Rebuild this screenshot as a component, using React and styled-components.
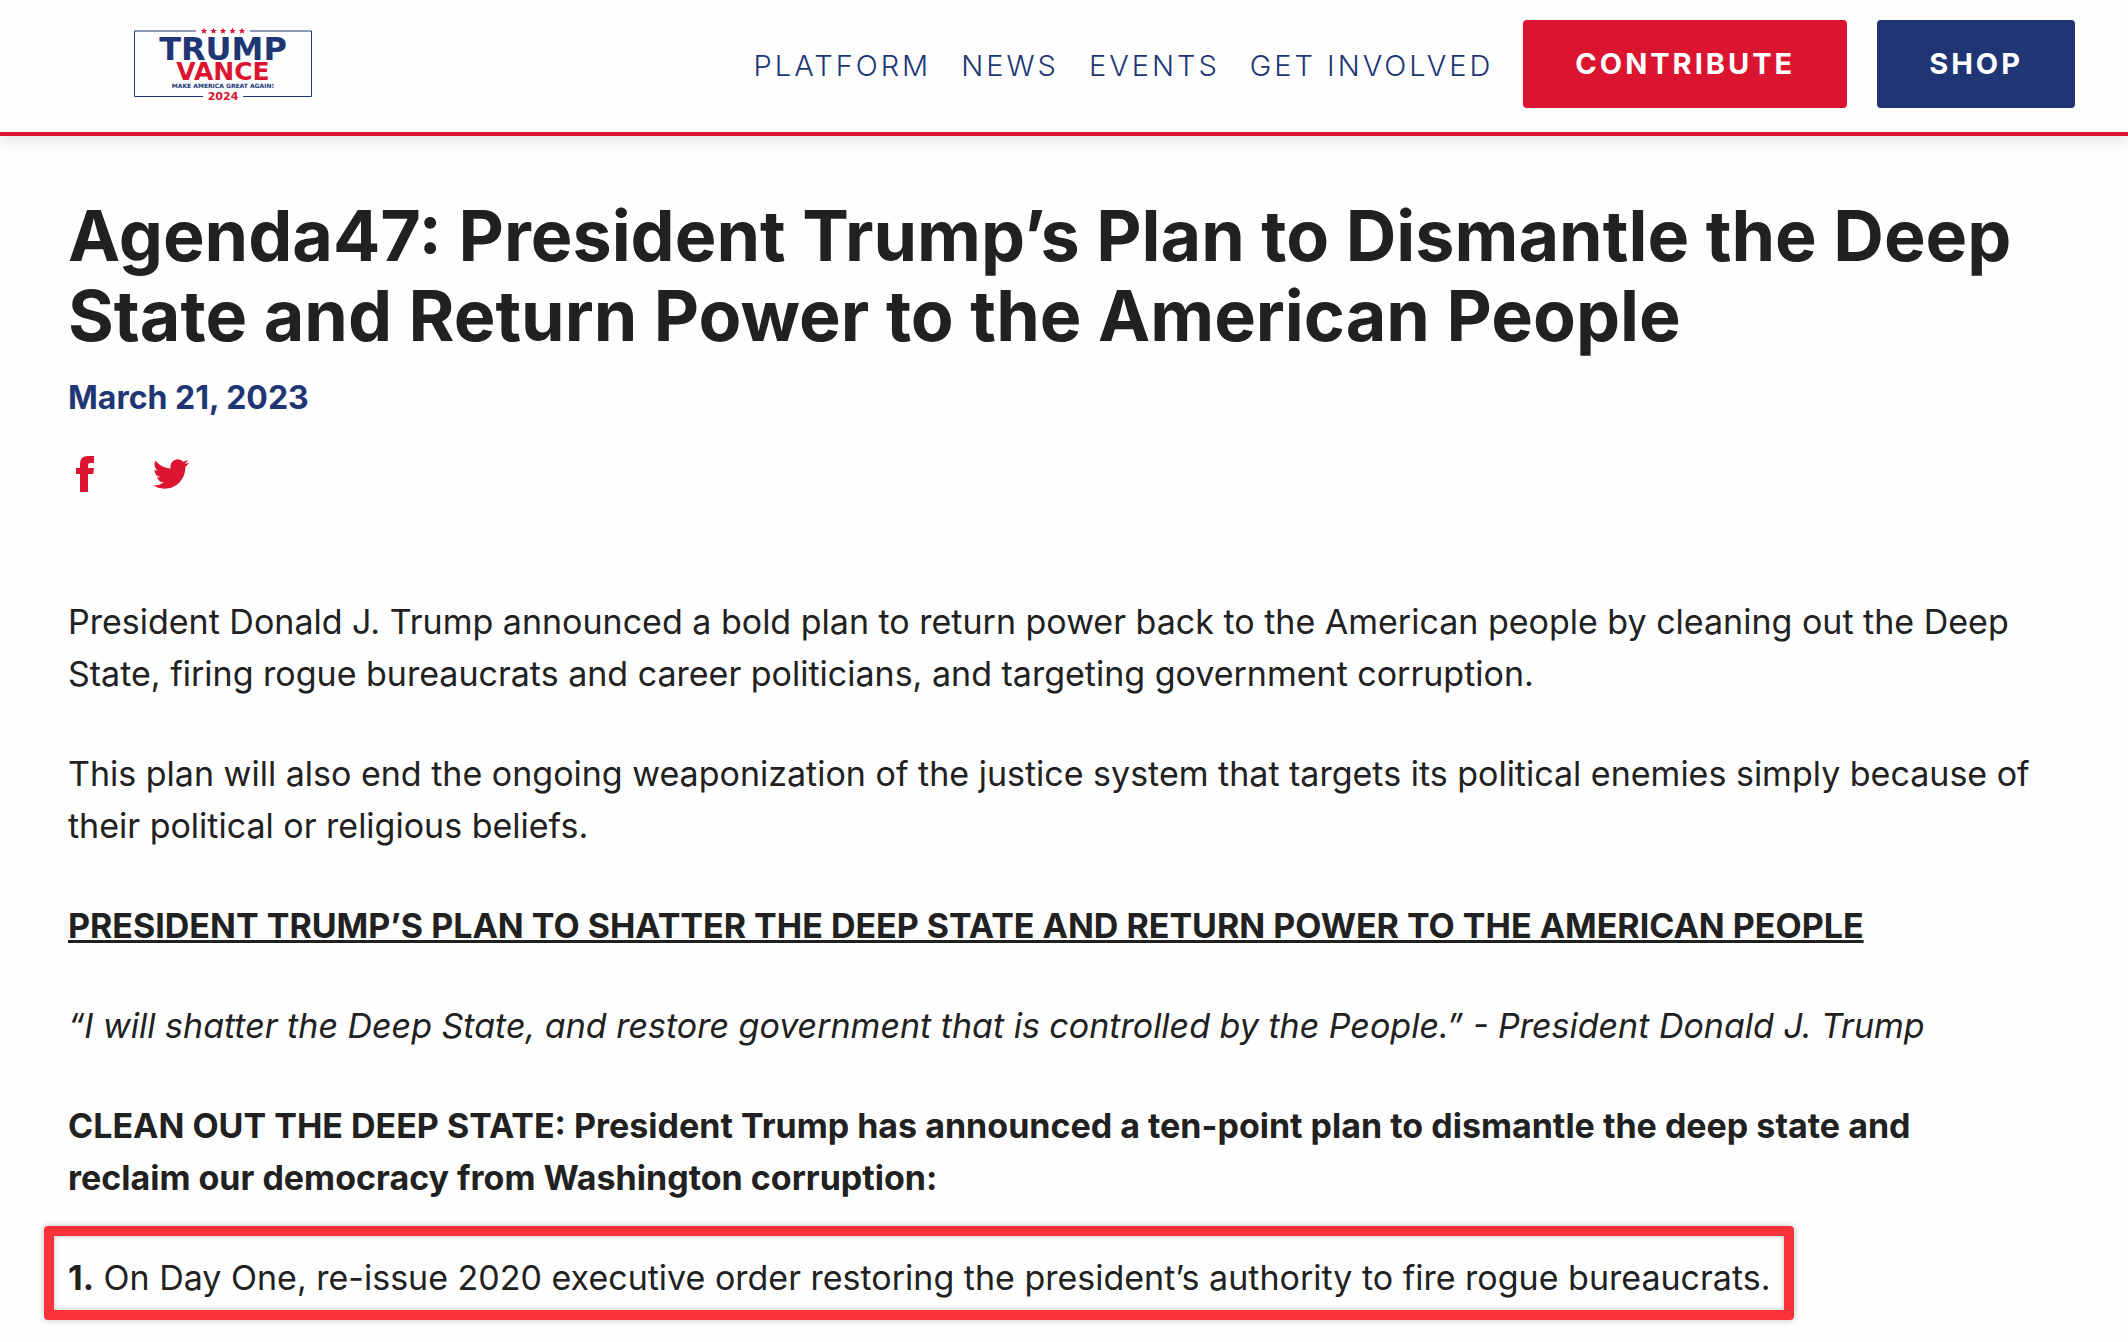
import React from "react";
import styled, { createGlobalStyle } from "styled-components";

const colors = { red: "#db1430", navy: "#203674", ink: "#212121", mark: "#fd3139" };

const GlobalStyle = createGlobalStyle`
  * { box-sizing: border-box; }
  body {
    margin: 0;
    background: #fefefe;
    color: ${colors.ink};
    font-family: Inter, "Open Sans", sans-serif;
    -webkit-font-smoothing: antialiased;
  }
`;

const Header = styled.header`
  display: flex;
  align-items: flex-start;
  justify-content: space-between;
  padding: 20px 53px 24px 134px;
  background: #fefefe;
  border-bottom: 4px solid ${colors.red};
  box-shadow: 0 4px 16px rgba(0, 0, 0, 0.12);
`;

const LogoLink = styled.a`
  display: block;
  padding-top: 6px;
  svg { display: block; }
`;

const Nav = styled.nav`
  display: flex;
  align-items: center;
  gap: 30px;
`;

const NavLink = styled.a`
  padding-top: 4px;
  color: ${colors.navy};
  font-size: 29px;
  font-weight: 300;
  line-height: 36px;
  letter-spacing: 3px;
  text-decoration: none;
  text-transform: uppercase;
  white-space: nowrap;
`;

const NavButton = styled.button`
  height: 88px;
  padding: 0 52px;
  border: 0;
  border-radius: 4px;
  background: ${(p) => p.$color};
  color: #fff;
  font: 700 29px/36px Inter, "Open Sans", sans-serif;
  letter-spacing: 3px;
  text-transform: uppercase;
  cursor: pointer;
`;

const Article = styled.article`
  padding: 60px 92px 22px 68px;
`;

const Title = styled.h1`
  margin: 0;
  font-size: 70px;
  font-weight: 700;
  line-height: 80px;
`;

const PostDate = styled.time`
  display: block;
  margin-top: 16px;
  color: ${colors.navy};
  font-size: 32px;
  font-weight: 700;
  line-height: 52px;
`;

const Share = styled.div`
  display: flex;
  align-items: center;
  gap: 55px;
  height: 48px;
  margin: 26px 0 98px;
  padding-left: 4px;
`;

const ShareLink = styled.a`
  display: flex;
  color: ${colors.red};
`;

const Paragraph = styled.p`
  margin: 0 0 48px;
  font-size: 34px;
  font-weight: ${(p) => (p.$bold ? 700 : 400)};
  font-style: ${(p) => (p.$italic ? "italic" : "normal")};
  line-height: 52px;
`;

const Underlined = styled.u`
  text-decoration-thickness: 3px;
  text-underline-offset: 2px;
`;

const Highlight = styled.p`
  width: fit-content;
  margin: -26px 0 0 -24px;
  padding: 16px 14px 6px;
  border: 10px solid ${colors.mark};
  border-radius: 4px;
  box-shadow: 0 0 6px rgba(0, 0, 0, 0.25), inset 0 0 5px rgba(0, 0, 0, 0.25);
  font-size: 34px;
  line-height: 52px;
`;

const STAR = "M0-3.4L.9-1.1 3.3-1 1.4.5 2 2.8 0 1.5-2 2.8-1.4.5-3.3-1-.9-1.1Z";

function Logo() {
  return (
    <svg width="178" height="78" viewBox="0 0 178 78" role="img" aria-label="Trump Vance 2024" fontFamily="'DejaVu Sans', sans-serif" fontWeight="700" textAnchor="middle">
      <path d="M62 5H.5V70.5H69M116 5H177.5V70.5H109" fill="none" stroke={colors.navy} />
      {[70, 79.5, 89, 98.5, 108].map((x) => (
        <path key={x} d={STAR} transform={`translate(${x} 5)`} fill={colors.red} />
      ))}
      <text x="89" y="34" fontSize="32" fill={colors.navy}>TRUMP</text>
      <text x="89" y="54" fontSize="25" fill={colors.red}>VANCE</text>
      <text x="89" y="62" fontSize="6" fill={colors.navy}>MAKE AMERICA GREAT AGAIN!</text>
      <text x="89" y="74" fontSize="11" fill={colors.red}>2024</text>
    </svg>
  );
}

function FacebookIcon() {
  return (
    <svg width="26" height="36" viewBox="0 0 26 36" fill="currentColor" aria-hidden="true">
      <path d="M8 36V18H4V12H8V8.300C8 3 10.500 0 16 0H22V7H18.500C16.500 7 16 8 16 9.500V12H22L21.300 18H16V36Z" />
    </svg>
  );
}

function TwitterIcon() {
  return (
    <svg width="36" height="36" viewBox="0 0 24 24" fill="currentColor" aria-hidden="true">
      <path d="M23.953 4.570a10 10 0 0 1-2.825.775 4.958 4.958 0 0 0 2.163-2.723 10 10 0 0 1-3.127 1.184 4.920 4.920 0 0 0-8.384 4.482C7.690 8.095 4.067 6.130 1.640 3.162a4.822 4.822 0 0 0-.666 2.475c0 1.710.870 3.213 2.188 4.096a4.904 4.904 0 0 1-2.228-.616v.060a4.923 4.923 0 0 0 3.946 4.827 4.996 4.996 0 0 1-2.212.085 4.936 4.936 0 0 0 4.604 3.417 9.867 9.867 0 0 1-6.102 2.105c-.390 0-.779-.023-1.170-.067a13.995 13.995 0 0 0 7.557 2.209c9.053 0 13.998-7.496 13.998-13.985 0-.210 0-.420-.015-.630a9.935 9.935 0 0 0 2.460-2.548Z" />
    </svg>
  );
}

export default function App() {
  return (
    <>
      <GlobalStyle />
      <Header>
        <LogoLink href="#home"><Logo /></LogoLink>
        <Nav>
          {["Platform", "News", "Events", "Get Involved"].map((label) => (
            <NavLink key={label} href="#nav">{label}</NavLink>
          ))}
          <NavButton type="button" $color={colors.red}>Contribute</NavButton>
          <NavButton type="button" $color={colors.navy}>Shop</NavButton>
        </Nav>
      </Header>
      <Article>
        <Title>Agenda47: President Trump’s Plan to Dismantle the Deep State and Return Power to the American People</Title>
        <PostDate dateTime="2023-03-21">March 21, 2023</PostDate>
        <Share>
          <ShareLink href="#facebook" aria-label="Share on Facebook"><FacebookIcon /></ShareLink>
          <ShareLink href="#twitter" aria-label="Share on Twitter"><TwitterIcon /></ShareLink>
        </Share>
        <Paragraph>
          President Donald J. Trump announced a bold plan to return power back to the American people by cleaning out the Deep State, firing rogue bureaucrats and career politicians, and targeting government corruption.
        </Paragraph>
        <Paragraph>
          This plan will also end the ongoing weaponization of the justice system that targets its political enemies simply because of their political or religious beliefs.
        </Paragraph>
        <Paragraph $bold>
          <Underlined>PRESIDENT TRUMP’S PLAN TO SHATTER THE DEEP STATE AND RETURN POWER TO THE AMERICAN PEOPLE</Underlined>
        </Paragraph>
        <Paragraph $italic>
          “I will shatter the Deep State, and restore government that is controlled by the People.” - President Donald J. Trump
        </Paragraph>
        <Paragraph $bold>
          CLEAN OUT THE DEEP STATE: President Trump has announced a ten-point plan to dismantle the deep state and reclaim our democracy from Washington corruption:
        </Paragraph>
        <Highlight>
          <strong>1.</strong> On Day One, re-issue 2020 executive order restoring the president’s authority to fire rogue bureaucrats.
        </Highlight>
      </Article>
    </>
  );
}
